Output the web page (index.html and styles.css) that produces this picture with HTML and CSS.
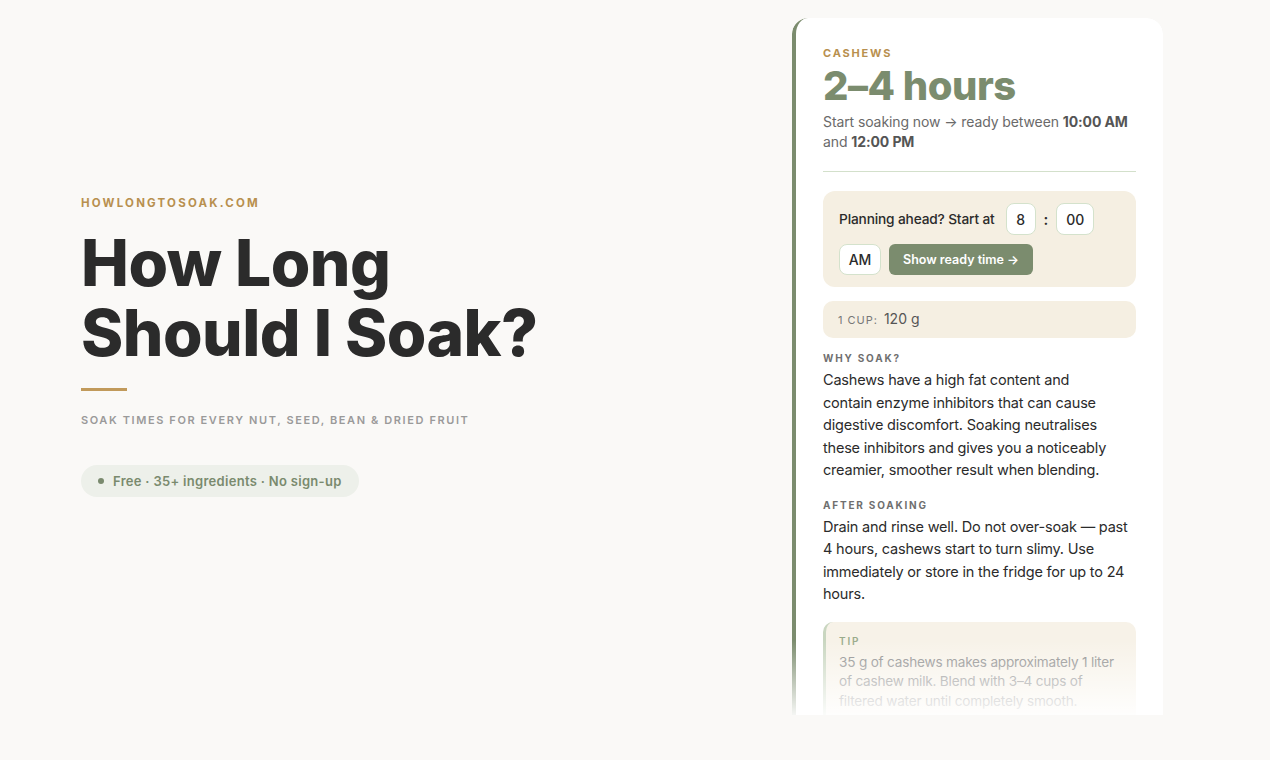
FILE: index.html
```html
<!DOCTYPE html>
<html lang="en">
<head>
  <meta charset="UTF-8">
  <meta name="viewport" content="width=device-width, initial-scale=1.0">
  <title>How Long Should I Soak?</title>
  <link rel="stylesheet" href="styles.css">
</head>
<body>
  <div class="page">
    <section class="intro">
      <div class="site-name">HOWLONGTOSOAK.COM</div>
      <h1>How Long<br>Should I Soak?</h1>
      <div class="rule"></div>
      <p class="tagline">Soak times for every nut, seed, bean &amp; dried fruit</p>
      <div class="pill"><span class="dot"></span>Free · 35+ ingredients · No sign-up</div>
    </section>

    <section class="card-wrap">
      <div class="card">
        <div class="ingredient">CASHEWS</div>
        <div class="duration">2–4 hours</div>
        <p class="ready">Start soaking now → ready between <b>10:00 AM</b> and <b>12:00 PM</b></p>
        <hr class="divider">

        <div class="planner">
          <span class="planner-label">Planning ahead? Start at</span>
          <span class="time-box">8</span>
          <span class="colon">:</span>
          <span class="time-box wide">00</span>
          <span class="time-box ampm">AM</span>
          <button class="show-btn">Show ready time →</button>
        </div>

        <div class="cup"><span class="cup-label">1 cup:</span> 120 g</div>

        <h3 class="section-title">Why soak?</h3>
        <p class="body-text narrow">Cashews have a high fat content and contain enzyme inhibitors that can cause digestive discomfort. Soaking neutralises these inhibitors and gives you a noticeably creamier, smoother result when blending.</p>

        <h3 class="section-title">After soaking</h3>
        <p class="body-text">Drain and rinse well. Do not over-soak — past 4 hours, cashews start to turn slimy. Use immediately or store in the fridge for up to 24 hours.</p>

        <div class="tip">
          <div class="tip-title">Tip</div>
          <p class="tip-text">35 g of cashews makes approximately 1 liter of cashew milk. Blend with 3–4 cups of filtered water until completely smooth.</p>
        </div>
      </div>
      <div class="fade"></div>
    </section>
  </div>
</body>
</html>
```

FILE: styles.css
```css
body {
  margin: 0;
  background-color: #FAF9F7;
  font-family: 'Inter', 'Liberation Sans', sans-serif;
  color: #2B2B2B;
}
.page {
  display: flex;
  height: 760px;
  overflow: hidden;
}
.intro {
  flex: 0 0 792px;
  padding: 196px 0 0 81px;
  box-sizing: border-box;
}
.site-name {
  font-size: 11.5px;
  font-weight: 700;
  letter-spacing: 2.2px;
  color: #B8904F;
}
h1 {
  margin: 18px 0 0;
  font-size: 64px;
  line-height: 70px;
  font-weight: 800;
  letter-spacing: -0.5px;
  color: #2B2B2B;
}
.rule {
  width: 46px;
  height: 3px;
  background-color: #C19A5B;
  margin-top: 20px;
}
.tagline {
  margin: 22px 0 0;
  font-size: 11px;
  font-weight: 600;
  letter-spacing: 1.6px;
  text-transform: uppercase;
  color: #9A9A9A;
}
.pill {
  display: inline-flex;
  align-items: center;
  margin-top: 38px;
  height: 32px;
  padding: 0 17px;
  border-radius: 16px;
  background-color: #EDF0EA;
  color: #7A8A6E;
  font-size: 13px;
  font-weight: 600;
  letter-spacing: 0.3px;
}
.dot {
  width: 6px;
  height: 6px;
  border-radius: 50%;
  background-color: #7A8A6E;
  margin-right: 9px;
}

.card-wrap {
  position: relative;
  flex: 0 0 371px;
  margin-top: 18px;
  height: 697px;
  overflow: hidden;
  border-radius: 16px 16px 0 0;
}
.card {
  background-color: #FFFFFF;
  border-left: 4px solid #7B8C6E;
  border-radius: 16px;
  padding: 28px 27px 40px 27px;
  box-shadow: 0 4px 24px rgba(0,0,0,0.05);
}
.fade {
  position: absolute;
  left: 0;
  right: 0;
  bottom: 0;
  height: 75px;
  background: linear-gradient(rgba(255,255,255,0), rgba(255,255,255,0.92));
}
.ingredient {
  font-size: 11px;
  font-weight: 700;
  letter-spacing: 1.8px;
  color: #B8904F;
}
.duration {
  margin-top: 2px;
  font-size: 40px;
  line-height: 48px;
  font-weight: 800;
  letter-spacing: -0.5px;
  color: #7B8C6E;
}
.ready {
  margin: 2px 0 0;
  font-size: 14px;
  line-height: 20px;
  letter-spacing: -0.1px;
  color: #6A6A6A;
}
.ready b {
  color: #555555;
}
.divider {
  border: none;
  border-top: 1px solid #D3E0CB;
  margin: 19px 0 19px;
}
.planner {
  display: flex;
  flex-wrap: wrap;
  align-items: center;
  gap: 9px 8px;
  background-color: #F5EFE2;
  border-radius: 12px;
  padding: 12px 16px 12px 16px;
}
.planner-label {
  font-size: 13.7px;
  font-weight: 500;
  letter-spacing: -0.15px;
  color: #2B2B2B;
  margin-right: 3px;
}
.time-box {
  display: inline-flex;
  align-items: center;
  justify-content: center;
  width: 30px;
  height: 32px;
  box-sizing: border-box;
  border: 1px solid #D4E2CC;
  border-radius: 8px;
  background-color: #FFFFFF;
  font-size: 14px;
  font-weight: 500;
}
.time-box.wide {
  width: 38px;
}
.time-box.ampm {
  width: 42px;
  height: 31px;
}
.colon {
  font-size: 15px;
  font-weight: 600;
}
.show-btn {
  height: 31px;
  padding: 0 14px;
  border: none;
  border-radius: 6px;
  background-color: #7B8C6E;
  color: #FFFFFF;
  font-family: inherit;
  font-size: 12.5px;
  font-weight: 600;
}
.cup {
  margin-top: 14px;
  background-color: #F5EFE2;
  border-radius: 10px;
  padding: 8px 15px;
  font-size: 14px;
  line-height: 20px;
  color: #555555;
}
.cup-label {
  font-size: 11px;
  letter-spacing: 1px;
  text-transform: uppercase;
  color: #777777;
  margin-right: 2px;
}
.section-title {
  margin: 14px 0 5px;
  font-size: 10px;
  font-weight: 700;
  letter-spacing: 1.8px;
  text-transform: uppercase;
  color: #6F6F6F;
}
.body-text {
  margin: 0;
  font-size: 14.5px;
  line-height: 22.5px;
  letter-spacing: -0.2px;
  color: #2B2B2B;
}
.body-text.narrow {
  max-width: 296px;
}
.body-text + .section-title {
  margin-top: 17px;
}
.tip {
  margin-top: 16px;
  border-left: 3px solid #C9D6C0;
  border-radius: 10px;
  background-color: #F7F2E8;
  padding: 13px 15px 14px 13px;
}
.tip-title {
  font-size: 10px;
  font-weight: 600;
  letter-spacing: 1.8px;
  text-transform: uppercase;
  color: #9AAB8C;
}
.tip-text {
  margin: 6px 0 0;
  font-size: 13.6px;
  line-height: 19.5px;
  letter-spacing: -0.2px;
  color: #8A8A8A;
}
```
